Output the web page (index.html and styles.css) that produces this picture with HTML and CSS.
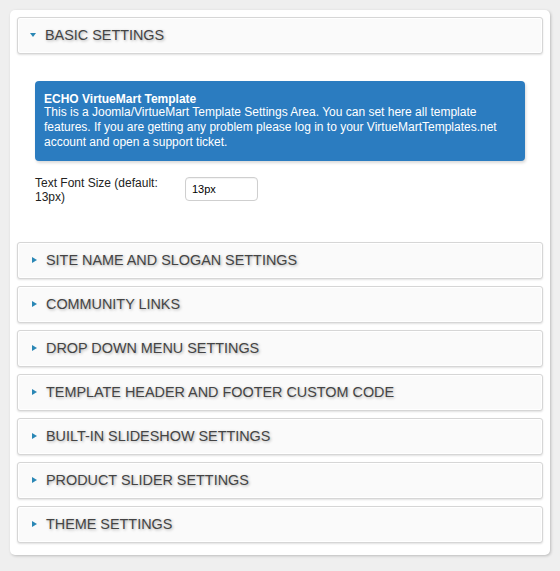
FILE: index.html
```html
<!DOCTYPE html>
<html>
<head>
<meta charset="utf-8">
<link rel="stylesheet" href="styles.css">
</head>
<body>
<div class="panel">
  <div class="acc-item open">
    <div class="acc-head"><span class="tri tri-down"></span><span class="acc-title">BASIC SETTINGS</span></div>
    <div class="acc-body">
      <div class="info">
        <div class="info-title">ECHO VirtueMart Template</div>
        <p class="info-text">This is a Joomla/VirtueMart Template Settings Area. You can set here all template features. If you are getting any problem please log in to your VirtueMartTemplates.net account and open a support ticket.</p>
      </div>
      <div class="field">
        <label class="field-label">Text Font Size (default: 13px)</label>
        <input class="field-input" type="text" value="13px">
      </div>
    </div>
  </div>
  <div class="acc-item"><div class="acc-head"><span class="tri"></span><span class="acc-title">SITE NAME AND SLOGAN SETTINGS</span></div></div>
  <div class="acc-item"><div class="acc-head"><span class="tri"></span><span class="acc-title">COMMUNITY LINKS</span></div></div>
  <div class="acc-item"><div class="acc-head"><span class="tri"></span><span class="acc-title">DROP DOWN MENU SETTINGS</span></div></div>
  <div class="acc-item"><div class="acc-head"><span class="tri"></span><span class="acc-title">TEMPLATE HEADER AND FOOTER CUSTOM CODE</span></div></div>
  <div class="acc-item"><div class="acc-head"><span class="tri"></span><span class="acc-title">BUILT-IN SLIDESHOW SETTINGS</span></div></div>
  <div class="acc-item"><div class="acc-head"><span class="tri"></span><span class="acc-title">PRODUCT SLIDER SETTINGS</span></div></div>
  <div class="acc-item"><div class="acc-head"><span class="tri"></span><span class="acc-title">THEME SETTINGS</span></div></div>
</div>
</body>
</html>
```

FILE: styles.css
```css
html, body {
  margin: 0;
  padding: 0;
  background: #efefef;
}
body {
  padding: 10px;
  font-family: "Liberation Sans", Arial, sans-serif;
}
.panel {
  width: 540px;
  box-sizing: border-box;
  background: #fff;
  border-radius: 5px;
  padding: 7px 7px 5px 7px;
  box-shadow: 1px 1px 3px rgba(0,0,0,0.22);
}
.acc-item {
  margin-bottom: 7px;
}
.acc-head {
  height: 37px;
  box-sizing: border-box;
  display: flex;
  align-items: center;
  padding: 0 14px 1px 14px;
  background: #fafafa;
  border: 1px solid #d6d6d6;
  border-radius: 3px;
  box-shadow: 0 1px 2px rgba(0,0,0,0.12), inset 0 0 0 1px #ffffff;
}
.tri {
  width: 0;
  height: 0;
  border-top: 3.5px solid transparent;
  border-bottom: 3.5px solid transparent;
  border-left: 5px solid #2a87b5;
  margin-right: 9px;
}
.tri-down {
  border-left: 3.5px solid transparent;
  border-right: 3.5px solid transparent;
  border-top: 4px solid #2a87b5;
  border-bottom: 0;
  margin-left: -2px;
  margin-right: 9px;
}
.acc-title {
  font-size: 14.4px;
  color: #444;
  text-shadow: 1px 1px 3px rgba(0,0,0,0.32);
}
.acc-body {
  padding: 27px 18px 31px 18px;
}
.info {
  background: #2b7cc0;
  color: #fff;
  border-radius: 4px;
  padding: 12px 9px 11px 9px;
  box-shadow: 1px 2px 3px rgba(0,0,0,0.15);
  font-size: 12px;
}
.info-title {
  font-weight: bold;
  line-height: 12px;
}
.info-text {
  margin: 0;
  line-height: 15px;
}
.field {
  margin-top: 15px;
  display: flex;
  align-items: flex-start;
}
.field-label {
  width: 140px;
  margin-right: 10px;
  font-size: 12px;
  line-height: 14px;
  color: #222;
}
.field-input {
  margin-top: 1px;
  width: 73px;
  height: 24px;
  box-sizing: border-box;
  border: 1px solid #cfcfcf;
  border-radius: 4px;
  padding: 0 6px;
  font-family: "Liberation Sans", Arial, sans-serif;
  font-size: 11px;
  color: #000;
  background: #fff;
  box-shadow: inset 0 1px 1px rgba(0,0,0,0.05);
  outline: none;
}
```
